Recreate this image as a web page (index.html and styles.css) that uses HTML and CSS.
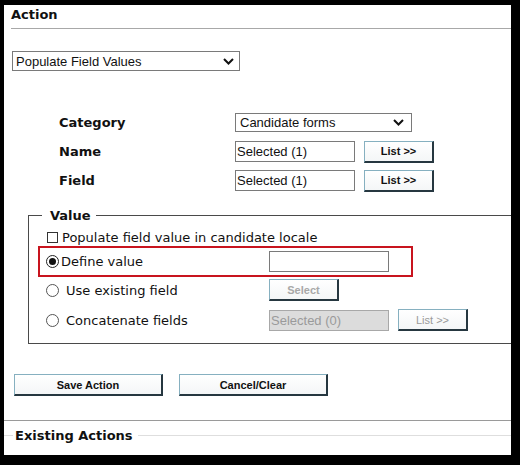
FILE: index.html
```html
<!DOCTYPE html>
<html>
<head>
<meta charset="utf-8">
<link rel="stylesheet" href="styles.css">
</head>
<body>
<div class="panel">
  <div class="hd">Action</div>

  <div class="select action-select">
    <span>Populate Field Values</span>
    <svg class="chev" width="11" height="7" viewBox="0 0 11 7"><path d="M1 1 L5.5 5.5 L10 1" fill="none" stroke="#111" stroke-width="2"/></svg>
  </div>

  <div class="grid">
    <div class="row">
      <span class="lbl">Category</span>
      <div class="select cat-select">
        <span>Candidate forms</span>
        <svg class="chev" width="11" height="7" viewBox="0 0 11 7"><path d="M1 1 L5.5 5.5 L10 1" fill="none" stroke="#111" stroke-width="2"/></svg>
      </div>
    </div>
    <div class="row">
      <span class="lbl">Name</span>
      <div class="input">Selected (1)</div>
      <button class="btn small">List &gt;&gt;</button>
    </div>
    <div class="row">
      <span class="lbl">Field</span>
      <div class="input">Selected (1)</div>
      <button class="btn small">List &gt;&gt;</button>
    </div>
  </div>

  <fieldset class="value">
    <legend>Value</legend>
    <div class="vrow chkrow">
      <span class="check"></span>
      <span class="txt">Populate field value in candidate locale</span>
    </div>
    <div class="vrow red">
      <span class="opt near"><span class="radio on"></span><span class="txt">Define value</span></span>
      <div class="input"></div>
    </div>
    <div class="vrow r3">
      <span class="opt far"><span class="radio"></span><span class="txt">Use existing field</span></span>
      <button class="btn small disabled">Select</button>
    </div>
    <div class="vrow r4">
      <span class="opt far"><span class="radio"></span><span class="txt">Concatenate fields</span></span>
      <div class="input dis">Selected (0)</div>
      <button class="btn small disabled thin">List &gt;&gt;</button>
    </div>
  </fieldset>

  <div class="actions">
    <button class="btn wide">Save Action</button>
    <button class="btn wide">Cancel/Clear</button>
  </div>

  <div class="sep"></div>

  <div class="existing">
    <span class="ln short"></span>
    <span class="etitle">Existing Actions</span>
    <span class="ln long"></span>
  </div>
</div>
</body>
</html>
```
FILE: styles.css
```css
* { box-sizing: border-box; }
body {
  margin: 0;
  background: #000;
}
.panel {
  margin: 5px 9px 0 4px;
  height: 450px;
  background: #fff;
  overflow: hidden;
  font-family: "DejaVu Sans", Verdana, sans-serif;
  font-size: 13px;
  color: #111;
}
.hd {
  margin-left: 7px;
  padding: 2px 0 6px;
  border-bottom: 1px solid #a8a8a8;
  font-weight: bold;
  line-height: 15px;
}
.select {
  display: flex;
  align-items: center;
  justify-content: space-between;
  border: 1px solid #7a7a7a;
  background: #fff;
  font-family: "Liberation Sans", Arial, sans-serif;
  font-size: 13px;
  color: #111;
}
.action-select {
  margin: 22px 0 0 8px;
  width: 228px;
  height: 20px;
  padding: 0 3px 0 3px;
}
.action-select .chev { margin-right: 2px; }
.cat-select {
  width: 177px;
  height: 19px;
  padding: 0 7px 0 4px;
}
.grid {
  margin-top: 40px;
  padding-left: 55px;
  display: flex;
  flex-direction: column;
  gap: 6px;
}
.row {
  height: 23px;
  display: flex;
  align-items: center;
}
.lbl {
  width: 176px;
  font-weight: bold;
}
.input {
  width: 120px;
  height: 21px;
  border: 1px solid #7a7a7a;
  background: #fff;
  font-family: "Liberation Sans", Arial, sans-serif;
  font-size: 13px;
  line-height: 19px;
  padding-left: 1px;
  color: #111;
}
.input.dis {
  background: #dcdcdc;
  border-color: #a8a8a8;
  color: #9a9a9a;
}
.btn {
  height: 22px;
  padding: 0;
  background: linear-gradient(#ffffff, #f4f6f7);
  border-style: solid;
  border-width: 1px 2px 2px 1px;
  border-color: #86b0c0 #263740 #263740 #86b0c0;
  font-family: "Liberation Sans", Arial, sans-serif;
  font-size: 11px;
  font-weight: bold;
  color: #111;
}
.btn.small {
  width: 70px;
  margin-left: 9px;
}
.btn.disabled { color: #a8a8a8; }
.btn.thin { font-weight: normal; color: #9a9a9a; }
.value {
  margin: 16px -30px 0 24px;
  padding: 0 0 12px 9px;
  border: 1px solid #4a4a4a;
  min-width: 0;
}
.value legend {
  margin-left: 4px;
  padding: 0 5px 0 8px;
  font-weight: bold;
  line-height: 15px;
}
.vrow {
  display: flex;
  align-items: center;
}
.chkrow {
  margin-top: 6px;
  height: 17px;
  padding-left: 9px;
}
.check {
  width: 11px;
  height: 11px;
  border: 1px solid #333;
  background: #fff;
  margin-right: 4px;
}
.red {
  width: 375px;
  height: 31px;
  border: 2px solid #c8141e;
  padding-left: 7px;
}
.r3 {
  margin-top: 2px;
  height: 22px;
  padding-left: 9px;
}
.r4 {
  margin-top: 8px;
  height: 22px;
  padding-left: 9px;
}
.r3 .btn.small, .r4 .input { margin-left: 0; }
.opt {
  width: 222px;
  display: flex;
  align-items: center;
}
.radio {
  width: 13px;
  height: 13px;
  border-radius: 50%;
  border: 1px solid #555;
  background: #fff;
  display: flex;
  align-items: center;
  justify-content: center;
}
.radio.on { border-color: #222; }
.radio.on::after {
  content: "";
  width: 7px;
  height: 7px;
  border-radius: 50%;
  background: #111;
}
.near .radio { margin-right: 2px; margin-left: -1px; }
.far .radio { margin-right: 7px; margin-left: -1px; }
.actions {
  margin: 30px 0 0 10px;
  display: flex;
  gap: 16px;
}
.btn.wide { width: 149px; }
.sep {
  margin-top: 24px;
  border-top: 1px solid #9a9a9a;
}
.existing {
  margin-top: 7px;
  display: flex;
  align-items: flex-start;
}
.etitle {
  font-weight: bold;
  line-height: 15px;
  padding: 0 5px 0 2px;
}
.ln {
  margin-top: 7px;
  border-top: 1px solid #dedede;
}
.ln.short { width: 9px; }
.ln.long { flex: 1; }
```
